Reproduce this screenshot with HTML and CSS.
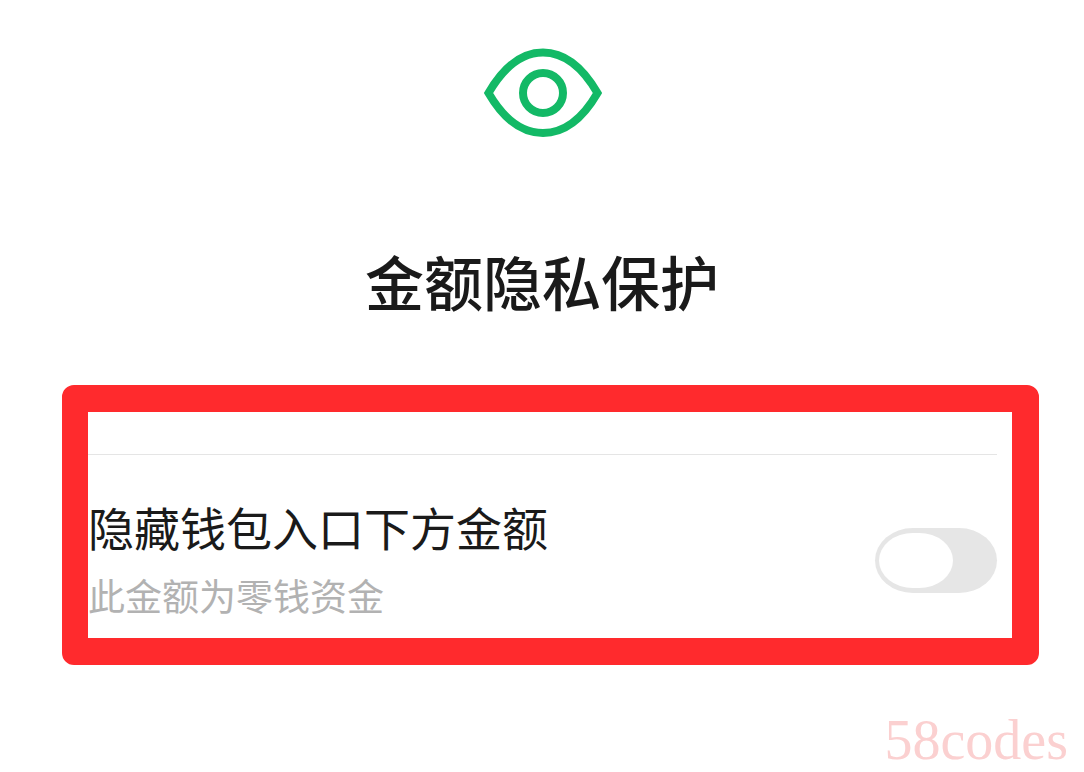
FILE: index.html
```html
<!DOCTYPE html>
<html lang="zh-CN">
<head>
  <meta charset="UTF-8">
  <meta name="viewport" content="width=device-width, initial-scale=1.0">
  <title>金额隐私保护</title>
  <link rel="stylesheet" href="styles.css">
</head>
<body>

  <header class="header">
    <svg class="eye" viewBox="0 0 120 92" aria-hidden="true">
      <path d="M6.500 46C21 21 39 5.500 61 5.500S101 21 115.500 46C101 71 83 86 61 86S21 71 6.500 46z"/>
      <circle cx="61" cy="46" r="20"/>
    </svg>
    <h1 class="title">金额隐私保护</h1>
  </header>

  <main class="highlight">
    <div class="setting">
      <label class="text" for="hideAmount">
        <span class="name">隐藏钱包入口下方金额</span>
        <span class="hint">此金额为零钱资金</span>
      </label>
      <input class="switch" type="checkbox" id="hideAmount">
    </div>
  </main>

  <footer class="mark">58codes</footer>

</body>
</html>
```

FILE: styles.css
```css
* {
  box-sizing: border-box;
}

body {
  margin: 0;
  background: #fff;
  color: #1a1a1a;
  font-family: "Noto Sans CJK SC", sans-serif;
}

.header {
  display: flex;
  flex-direction: column;
  align-items: center;
  padding-top: 47px;
}

.eye {
  width: 120px;
  height: 92px;
  fill: none;
  stroke: #13b966;
  stroke-width: 8;
  stroke-linejoin: miter;
}

.title {
  margin: 99px 0 61px;
  font-size: 59px;
  font-weight: 500;
  line-height: 86px;
}

/* red frame: round outside, square inside */
.highlight {
  margin: 0 45px 0 62px;
  padding: 42px 15px 9px 0;
  border: 27px solid #ff2a2d;
  border-left-width: 26px;
  border-radius: 12px;
}

.setting {
  display: flex;
  align-items: center;
  justify-content: space-between;
  padding-top: 36px;
  border-top: 1px solid #e5e5e5;
}

.text {
  display: flex;
  flex-direction: column;
}

.name {
  font-size: 46px;
  line-height: 70px;
}

.hint {
  color: #b2b2b2;
  font-size: 37px;
  line-height: 68px;
}

.switch {
  appearance: none;
  flex: none;
  display: flex;
  width: 122px;
  height: 65px;
  margin: 0;
  padding: 5px 4px;
  border-radius: 38px / 50%;
  background: #e6e6e6;
  cursor: pointer;
}

.switch::before {
  content: "";
  width: 74px;
  border-radius: 34px / 50%;
  background: #fff;
}

.switch:checked {
  justify-content: flex-end;
  background: #13b966;
}

.mark {
  padding: 43px 16px 0;
  color: #fbd0d0;
  font-family: "Liberation Serif", serif;
  font-size: 56px;
  line-height: 64px;
  text-align: right;
}
```
